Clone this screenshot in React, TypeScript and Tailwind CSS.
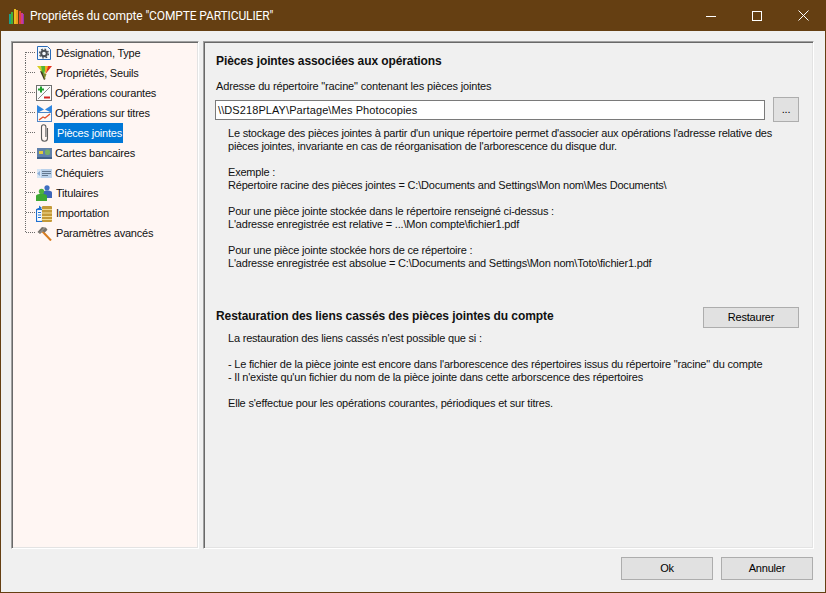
import React from "react";

const Connector = ({ first, last }: { first?: boolean; last?: boolean }) => (
  <svg width={11} height={20} className="shrink-0" shapeRendering="crispEdges">
    <line x1="0.5" y1={first ? 9 : 0} x2="0.5" y2={last ? 10 : 20} stroke="#6b6b6b" strokeDasharray="1 1" />
    <line x1="1" y1="9.5" x2="11" y2="9.5" stroke="#6b6b6b" strokeDasharray="1 1" />
  </svg>
);

const IconGear = () => (
  <svg width="14" height="14" viewBox="0 0 14 14">
    <path d="M0.500 0.500h10l3 3v10h-13z" fill="#f4f8fd" stroke="#2a6bb8" />
    <circle cx="7" cy="7.500" r="2.800" fill="#f4f8fd" stroke="#4a4f55" strokeWidth="2" />
    <circle cx="7" cy="7.500" r="4.400" fill="none" stroke="#4a4f55" strokeWidth="1.400" strokeDasharray="1.700 1.750" />
  </svg>
);
const IconFunnel = () => (
  <svg width="15" height="14" viewBox="0 0 15 14">
    <path d="M0 0h4l1.500 7z" fill="#d6cf22" />
    <path d="M4 0h5L7 9 5 7z" fill="#55b32e" />
    <path d="M8 0h3.500L8 8z" fill="#f2b21c" />
    <path d="M11 0h4L8.500 8z" fill="#e2331c" />
    <path d="M3 5l4 9 1.500-1L5 5.500z" fill="#3e3a1e" />
    <path d="M6 7l3.500 1-2 5.500z" fill="#7d8a2a" />
  </svg>
);
const IconPlusMinus = () => (
  <svg width="16" height="16" viewBox="0 0 16 16">
    <rect x="0.500" y="0.500" width="15" height="15" fill="#fbfbfb" stroke="#6f6f6f" />
    <path d="M2 14L14 2" stroke="#8a8a8a" />
    <path d="M2 4.500h6M5 1.500v6" stroke="#1f9e2c" strokeWidth="2" />
    <path d="M8 12.500h6" stroke="#d3201f" strokeWidth="2" />
  </svg>
);
const IconTitres = () => (
  <svg width="15" height="17" viewBox="0 0 15 17">
    <path d="M0 0l7 4.500L0 8z" fill="#2f86e0" />
    <path d="M15 0L8 4.500 15 8z" fill="#2f86e0" />
    <rect x="0.500" y="7.500" width="14" height="9" fill="#fafafa" stroke="#4f86c8" />
    <path d="M2 15l4-3 2 1 5-4" fill="none" stroke="#e4502a" strokeWidth="1.300" />
  </svg>
);
const IconClip = () => (
  <svg width="9" height="18" viewBox="0 0 9 18">
    <path d="M7.500 4v10.300a3 3 0 0 1-6 0V3a2.200 2.200 0 0 1 4.400 0v10" fill="none" stroke="#5a5a5a" strokeWidth="1.100" />
  </svg>
);
const IconCard = () => (
  <svg width="15" height="11" viewBox="0 0 15 11">
    <rect width="15" height="11" fill="#5f80aa" />
    <rect y="9" width="15" height="2" fill="#3f5f8a" />
    <rect x="2" y="3" width="4" height="3" fill="#e2ca3e" />
    <rect x="8" y="1.500" width="5" height="5.500" rx="2" fill="#79b162" />
  </svg>
);
const IconCheque = () => (
  <svg width="15" height="9" viewBox="0 0 15 9">
    <rect width="15" height="9" fill="#bad1ea" />
    <rect width="4" height="9" fill="#d7e5f4" />
    <path d="M0 4.500L3 2v5z" fill="#8fb0d8" />
    <path d="M5 2.500h9M5 4.500h9M5 6.500h6" stroke="#64788f" />
  </svg>
);
const IconUsers = () => (
  <svg width="16" height="16" viewBox="0 0 16 16">
    <circle cx="11" cy="2.800" r="2.600" fill="#3f6fc0" />
    <path d="M7 13V7.500C7 6 9 5.500 11 5.500S16 6 16 7.500V13z" fill="#3d66b8" />
    <circle cx="5.500" cy="6.500" r="2.700" fill="#4fb23e" />
    <path d="M0 16v-5c0-1.500 2-2 5.500-2S11 9.500 11 11v5z" fill="#3ea832" />
  </svg>
);
const IconImport = () => (
  <svg width="16" height="17" viewBox="0 0 16 17">
    <rect x="0.500" y="4.500" width="6" height="12" fill="#fff" stroke="#2070d0" strokeWidth="1.200" />
    <path d="M2 7.500h3M2 10h3M2 12.500h3" stroke="#2070d0" />
    <path d="M1 3h2V0.500L6 3 3 5z" fill="#2070d0" />
    <rect x="6" y="1" width="10" height="16" rx="1" fill="#c49a38" />
    <path d="M6 4.500h10M6 8h10M6 11.500h10M6 14.500h10" stroke="#f2dc94" />
  </svg>
);
const IconHammer = () => (
  <svg width="15" height="15" viewBox="0 0 15 15">
    <path d="M5.500 5.500l8.500 9" stroke="#d87c1e" strokeWidth="2" />
    <path d="M0.500 6l4.500-5 4 .8 1.500 2-3 3-1.500-1.500L3 8z" fill="#77736c" />
    <path d="M8 1.500l-5 5" stroke="#a8a49c" />
  </svg>
);

const items: { label: string; icon: React.ReactNode; gap: string; selected?: boolean }[] = [
  { label: "Désignation, Type", icon: <IconGear />, gap: "ml-[4px]" },
  { label: "Propriétés, Seuils", icon: <IconFunnel />, gap: "ml-[4px]" },
  { label: "Opérations courantes", icon: <IconPlusMinus />, gap: "ml-[3px]" },
  { label: "Opérations sur titres", icon: <IconTitres />, gap: "ml-[3px]" },
  { label: "Pièces jointes", icon: <IconClip />, gap: "ml-[2px]", selected: true },
  { label: "Cartes bancaires", icon: <IconCard />, gap: "ml-[3px]" },
  { label: "Chéquiers", icon: <IconCheque />, gap: "ml-[3px]" },
  { label: "Titulaires", icon: <IconUsers />, gap: "ml-[4px]" },
  { label: "Importation", icon: <IconImport />, gap: "ml-[4px]" },
  { label: "Paramètres avancés", icon: <IconHammer />, gap: "ml-[4px]" },
];

const Line = ({ children }: { children?: React.ReactNode }) => (
  <div className="h-[13px] leading-[13px] whitespace-pre">{children}</div>
);

const Btn = ({ children, className }: { children: React.ReactNode; className: string }) => (
  <button className={`flex items-center justify-center bg-[#e1e1e1] border border-[#adadad] text-[11px] text-black ${className}`}>
    {children}
  </button>
);

const sunken =
  "border border-t-[#a0a0a0] border-l-[#a0a0a0] border-r-white border-b-white shadow-[inset_1px_1px_0_#696969,inset_-1px_-1px_0_#e3e3e3]";

export default function App() {
  return (
    <div className="w-[826px] h-[593px] flex flex-col overflow-hidden bg-[#f0f0f0] border-x border-b border-[#653f12] text-[11px] tracking-[-0.2px] text-[#111] font-['Liberation_Sans',sans-serif]">
      <div className="h-[31px] -mx-px shrink-0 flex items-center bg-[#653f12] text-white">
        <svg width="16" height="16" viewBox="0 0 16 16" className="ml-[9px]">
          <rect x="0" y="6" width="2" height="10" fill="#1fa08a" />
          <rect x="2" y="4" width="2" height="12" fill="#43b03a" />
          <rect x="5" y="1" width="2" height="15" fill="#e8c020" />
          <rect x="7" y="2" width="2" height="14" fill="#f09a20" />
          <rect x="10" y="3" width="2" height="13" fill="#e0443a" />
          <rect x="12" y="5" width="2" height="11" fill="#d03a90" />
          <rect x="14" y="6" width="1" height="10" fill="#8a3ab0" />
        </svg>
        <span className="ml-[5px] text-[12px] tracking-[-0.12px] font-['Roboto',sans-serif]">Propriétés du compte "COMPTE PARTICULIER"</span>
        <div className="ml-auto flex items-center h-full">
          <div className="w-[46px] flex justify-center">
            <svg width="10" height="10"><path d="M0 5.500h10" stroke="#fff" /></svg>
          </div>
          <div className="w-[46px] flex justify-center">
            <svg width="10" height="10"><rect x="0.500" y="0.500" width="9" height="9" fill="none" stroke="#fff" /></svg>
          </div>
          <div className="w-[46px] flex justify-center">
            <svg width="11" height="11"><path d="M0.500 0.500l10 10M10.500 0.500l-10 10" stroke="#fff" /></svg>
          </div>
        </div>
      </div>

      <div className="flex-1 flex flex-col min-h-0">
        <div className="flex mt-[10px] ml-[10px] mr-[11px] h-[508px] gap-[4px]">
          <div className={`w-[189px] bg-[#fff6f3] pt-px pl-[13px] ${sunken}`}>
            {items.map((it, i) => (
              <div key={it.label} className="h-5 flex items-center">
                <Connector first={i === 0} last={i === items.length - 1} />
                <span className="shrink-0 w-4 flex items-center justify-center">{it.icon}</span>
                <span
                  className={`${it.gap} h-5 flex items-center whitespace-nowrap ${
                    it.selected ? "bg-[#0078d7] text-white pl-[3px] pr-px" : "text-[#111]"
                  }`}
                >
                  {it.label}
                </span>
              </div>
            ))}
          </div>

          <div className={`flex-1 pl-[11px] pr-[14px] ${sunken}`}>
            <div className="mt-[12px] ml-px h-[15px] leading-[15px] font-bold text-[12px] tracking-[-0.1px]">Pièces jointes associées aux opérations</div>
            <div className="mt-[11px] ml-px h-[13px] leading-[13px] tracking-[-0.16px]">Adresse du répertoire "racine" contenant les pièces jointes</div>
            <div className="mt-[7px] flex items-start">
              <div className="w-[550px] h-[20px] bg-white border border-[#7a7a7a] pl-[2px] flex items-center tracking-[0.09px]">{"\\\\DS218PLAY\\Partage\\Mes Photocopies"}</div>
              <Btn className="ml-[8px] w-[26px] h-[25px] -mt-[3px]">...</Btn>
            </div>
            <div className="mt-[5px] pl-[13px]">
              <Line>Le stockage des pièces jointes à partir d'un unique répertoire permet d'associer aux opérations l'adresse relative des</Line>
              <Line>pièces jointes, invariante en cas de réorganisation de l'arborescence du disque dur.</Line>
              <Line />
              <Line>Exemple :</Line>
              <Line>Répertoire racine des pièces jointes = C:\Documents and Settings\Mon nom\Mes Documents\</Line>
              <Line />
              <Line>Pour une pièce jointe stockée dans le répertoire renseigné ci-dessus :</Line>
              <Line>L'adresse enregistrée est relative = ...\Mon compte\fichier1.pdf</Line>
              <Line />
              <Line>Pour une pièce jointe stockée hors de ce répertoire :</Line>
              <Line>L'adresse enregistrée est absolue = C:\Documents and Settings\Mon nom\Toto\fichier1.pdf</Line>
            </div>
            <div className="mt-[37px] flex items-start h-[21px]">
              <div className="ml-px font-bold text-[12px] tracking-[-0.08px]">Restauration des liens cassés des pièces jointes du compte</div>
              <Btn className="ml-auto w-[96px] h-[21px]">Restaurer</Btn>
            </div>
            <div className="mt-[4px] pl-[13px]">
              <Line>La restauration des liens cassés n'est possible que si :</Line>
              <Line />
              <Line>- Le fichier de la pièce jointe est encore dans l'arborescence des répertoires issus du répertoire "racine" du compte</Line>
              <Line>- Il n'existe qu'un fichier du nom de la pièce jointe dans cette arborscence des répertoires</Line>
              <Line />
              <Line>Elle s'effectue pour les opérations courantes, périodiques et sur titres.</Line>
            </div>
          </div>
        </div>

        <div className="flex justify-end gap-[8px] mt-[8px] mr-[12px]">
          <Btn className="w-[92px] h-[23px]">Ok</Btn>
          <Btn className="w-[92px] h-[23px]">Annuler</Btn>
        </div>
      </div>
    </div>
  );
}
